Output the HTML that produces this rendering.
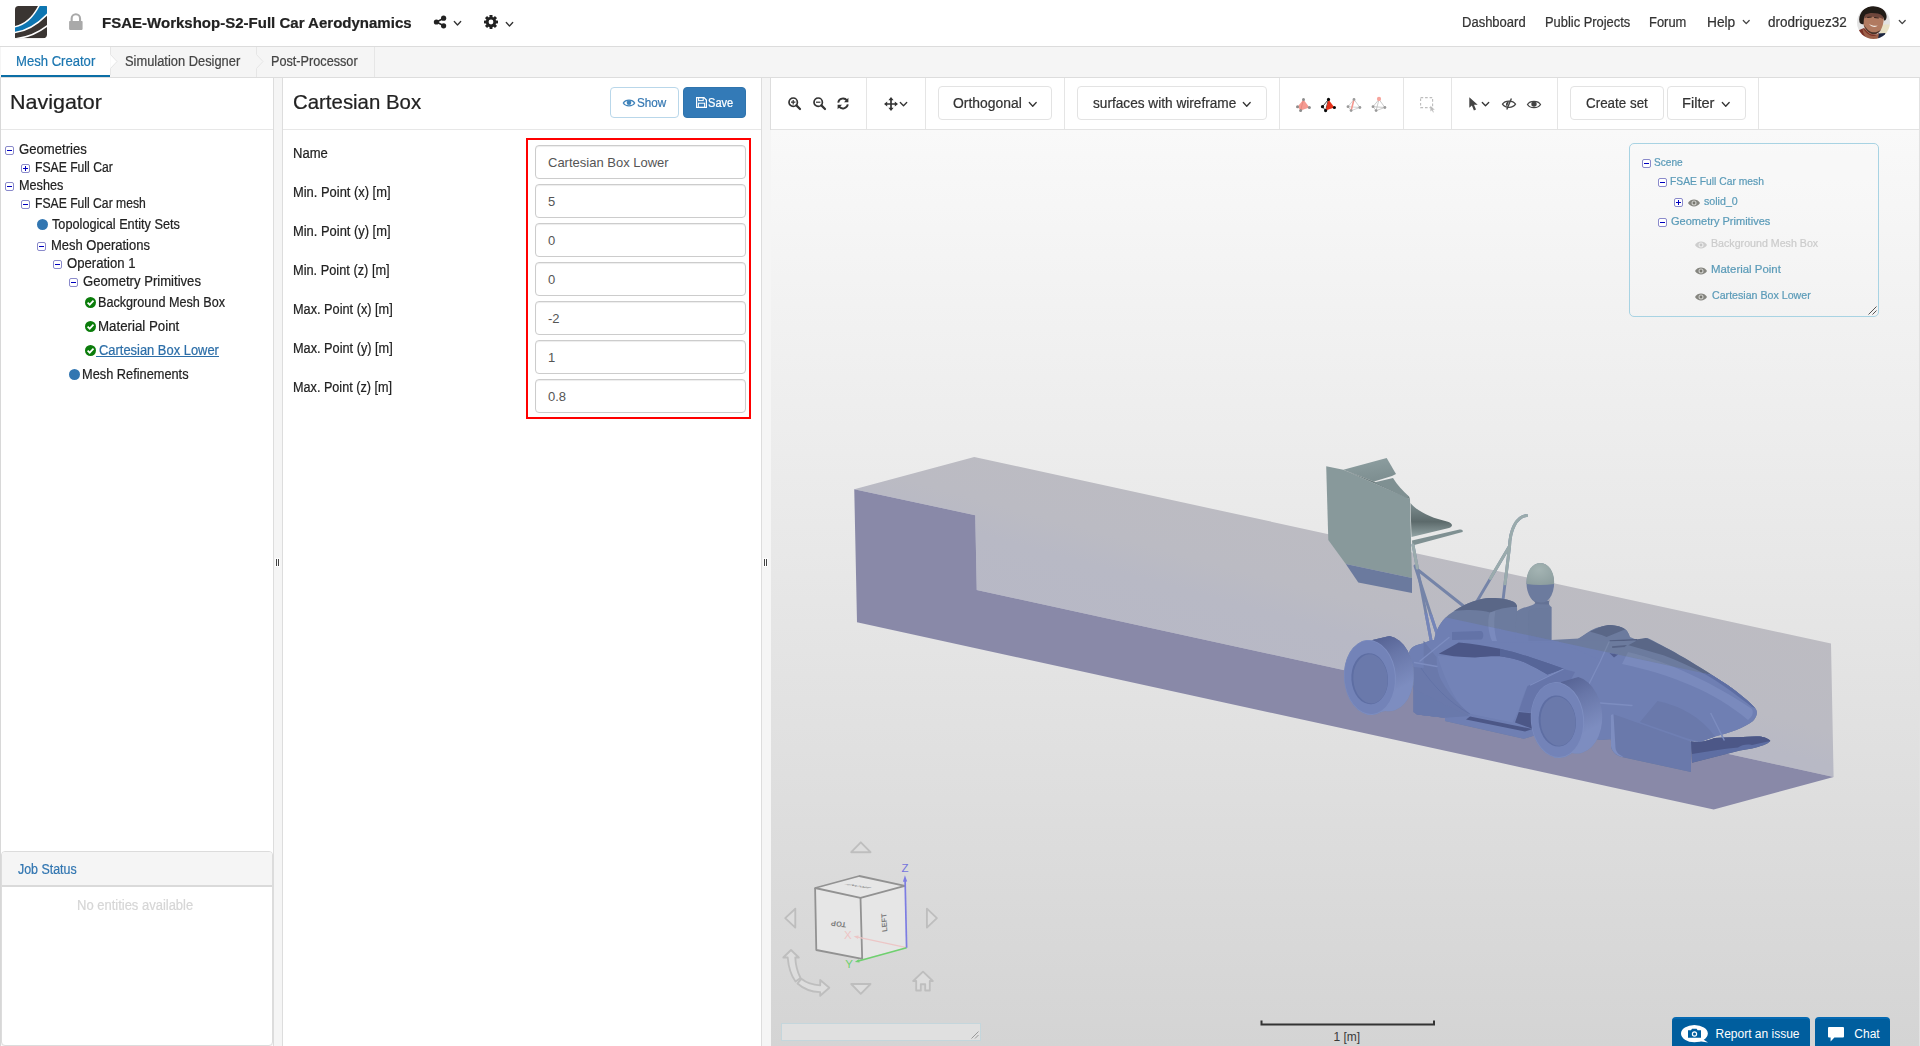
<!DOCTYPE html>
<html lang="en">
<head>
<meta charset="utf-8">
<title>FSAE-Workshop-S2-Full Car Aerodynamics</title>
<style>
*{box-sizing:border-box}
html,body{margin:0;padding:0}
body{width:1920px;height:1046px;overflow:hidden;background:#f5f5f5;font-family:"Liberation Sans",sans-serif;font-size:14px;color:#222;position:relative}
.abs{position:absolute}
.t{position:absolute;white-space:pre;line-height:1;transform-origin:0 0;display:block;-webkit-text-stroke:.22px currentColor}
svg{position:absolute;overflow:visible}
#hdr{position:absolute;left:0;top:0;width:1920px;height:47px;background:#fff;border-bottom:1px solid #dcdcdc}
#tabs{position:absolute;left:0;top:47px;width:1920px;height:31px;background:#f5f5f5;border-bottom:1px solid #dddddd}
#tab1{position:absolute;left:1px;top:0;width:109px;height:30px;background:#fff;border-bottom:2px solid #0b6ea6}
#nav{position:absolute;left:0;top:78px;width:274px;height:968px;background:#fff;border-left:1px solid #d8d8d8;border-right:1px solid #dddddd}
#form{position:absolute;left:282px;top:78px;width:480px;height:968px;background:#fff;border-left:1px solid #dddddd;border-right:1px solid #dddddd}
#view{position:absolute;left:770px;top:78px;width:1150px;height:968px;border-left:1px solid transparent;border-right:1px solid #e2e2e2;background-clip:padding-box;background-image:linear-gradient(to bottom,#f9f9f9 52px,#d4d4d4 968px)}
.phead{position:absolute;left:0;top:0;right:0;height:52px;border-bottom:1px solid #e7e7e7;background:#fff}
.btn{position:absolute;border-radius:4px;border:1px solid #e3e3e3;background:#fff}
.inp{position:absolute;left:252px;width:211px;height:34px;border:1px solid #ccc;border-radius:4px;background:#fff;box-shadow:inset 0 1px 1px rgba(0,0,0,.075);font-size:13px;color:#555;line-height:34px;padding-left:12px;white-space:pre}
.sep{position:absolute;top:0;width:1px;height:51px;background:#e5e5e5}
.xp{position:absolute;width:9px;height:9px;border:1px solid #8a8acb;border-radius:2px;background:#fff}
.xp:before{content:"";position:absolute;left:1px;top:3px;width:5px;height:1px;background:#0000c0}
.xp.plus:after{content:"";position:absolute;left:3px;top:1px;width:1px;height:5px;background:#0000c0}
.dot{position:absolute;width:11px;height:11px;border-radius:50%;background:#3276b1}
</style>
</head>
<body>
<!-- ===== top header ===== -->
<div id="hdr">
  <svg style="left:15px;top:5.8px" width="32" height="32.3" viewBox="0 0 32 32.3">
    <defs><clipPath id="lgc"><path d="M3.6,0 H30.6 Q32,0 32,1.4 V28.2 Q32,32.3 27.9,32.3 H0.8 Q0,32.3 0,31.5 V3.6 Q0,0 3.6,0 Z"/></clipPath></defs>
    <g clip-path="url(#lgc)">
      <rect width="32" height="32.3" fill="#3a3532"/>
      <path d="M0,20.7 C9,19 17.5,12.5 24,-0.5 L33,-0.5 L33,8.5 C22,18.8 11,25.2 0,26.6 Z" fill="#0d76b2"/>
      <path d="M-0.5,20.8 C9,19 17.5,12.5 24.1,-0.5" fill="none" stroke="#fff" stroke-width="1.5"/>
      <path d="M-0.5,26.65 C11,25.2 22,18.8 32.5,8.1" fill="none" stroke="#fff" stroke-width="1.5"/>
      <path d="M1,32.8 C12,31.6 23,27 32.5,19.7" fill="none" stroke="#fff" stroke-width="1.6"/>
    </g>
  </svg>
  <svg style="left:69px;top:12px" width="14" height="18" viewBox="69 12 14 18">
    <path d="M72.7,21.5 V18.5 A3.15,3.15 0 0 1 79,18.5 V21.5 H81.1 V18.5 A5.25,5.25 0 0 0 70.6,18.5 V21.5 Z" fill="#a9a9a9"/>
    <rect x="69.1" y="21" width="13.5" height="8.9" rx=".8" fill="#a9a9a9"/>
  </svg>
  <span class="t" style="left:101.53px;top:15.25px;font-size:15.5px;font-weight:700;color:#222;transform:scaleX(0.9689);">FSAE-Workshop-S2-Full Car Aerodynamics</span>
  <svg style="left:433px;top:15px" width="14" height="14" viewBox="0 0 14 14">
    <path d="M10.6,3.2 L3.6,7 L10.6,10.8" fill="none" stroke="#222" stroke-width="1.6"/>
    <circle cx="10.6" cy="3.2" r="2.6" fill="#222"/><circle cx="3.4" cy="7" r="2.6" fill="#222"/><circle cx="10.6" cy="10.8" r="2.6" fill="#222"/>
  </svg>
  <svg style="left:454px;top:21px" width="7" height="5" viewBox="0 0 7 5"><path d="M0.3,0.5 L3.5,4 L6.7,0.5" fill="none" stroke="#333" stroke-width="1.3" stroke-linecap="round" stroke-linejoin="round"/></svg>
  <svg style="left:484px;top:15px" width="14" height="14" viewBox="-7 -7 14 14">
    <g fill="#222">
      <circle r="5.2"/>
      <g id="gt"><rect x="-1.5" y="-7" width="3" height="3.2" rx=".4"/><rect x="-1.5" y="3.8" width="3" height="3.2" rx=".4"/></g>
      <use href="#gt" transform="rotate(45)"/><use href="#gt" transform="rotate(90)"/><use href="#gt" transform="rotate(135)"/>
    </g>
    <circle r="2.4" fill="#fff"/>
  </svg>
  <svg style="left:506px;top:22px" width="7" height="5" viewBox="0 0 7 5"><path d="M0.3,0.5 L3.5,4 L6.7,0.5" fill="none" stroke="#333" stroke-width="1.3" stroke-linecap="round" stroke-linejoin="round"/></svg>
  <span class="t" style="left:1461.57px;top:15.25px;font-size:14px;color:#333;transform:scaleX(0.9291);">Dashboard</span>
  <span class="t" style="left:1544.68px;top:15.25px;font-size:14px;color:#333;transform:scaleX(0.9209);">Public Projects</span>
  <span class="t" style="left:1649.08px;top:15.25px;font-size:14px;color:#333;transform:scaleX(0.9231);">Forum</span>
  <span class="t" style="left:1706.52px;top:15.25px;font-size:14px;color:#333;transform:scaleX(0.9815);">Help</span>
  <svg style="left:1743px;top:20px" width="6.5" height="4.6" viewBox="0 0 6.5 4.6"><path d="M0.3,0.5 L3.25,3.6 L6.2,0.5" fill="none" stroke="#444" stroke-width="1.3" stroke-linecap="round" stroke-linejoin="round"/></svg>
  <span class="t" style="left:1768.04px;top:15.25px;font-size:14px;color:#333;transform:scaleX(0.9625);">drodriguez32</span>
  <svg style="left:1857px;top:5.6px" width="33" height="33" viewBox="0 0 33 33">
    <defs><clipPath id="avc"><circle cx="16.5" cy="16.5" r="16.5"/></clipPath>
    <filter id="avb" x="-10%" y="-10%" width="120%" height="120%"><feGaussianBlur stdDeviation="0.55"/></filter></defs>
    <g clip-path="url(#avc)"><g filter="url(#avb)">
      <rect width="33" height="33" fill="#e3e3e3"/>
      <path d="M24,18.5 L34,18.5 L34,27 L23,28 Z" fill="#e9e2c6"/>
      <path d="M1,24.5 L7,22 L14,28 L21,28.5 L21.5,34 L-1,34 Z" fill="#7c3027"/>
      <path d="M21,27.5 L28.5,27 L26,34 L21,34 Z" fill="#1f2740"/>
      <path d="M6.5,23 C9,27 13,30 16,30 C19,30 21,28.5 22,27 L21,33 L12,34 C8,31 6,27 5.5,23.5 Z" fill="#9c6149"/>
      <path d="M5.5,12 C5,6 10,3 16,3.4 C22,3.8 27,6.5 26.8,12.5 C26.6,17 25.5,21 23.5,24.5 C21.5,27.5 18.5,29 15.5,28.6 C11.5,28 8.5,24.5 7,20.5 C6,17.5 5.6,14.5 5.5,12 Z" fill="#b17a60"/>
      <path d="M7,8 C12,5 22,5.5 26.5,9 L26,13 C21,10.5 12,10 7.5,12.5 Z" fill="#6f463a"/>
      <path d="M6.8,18.5 C8,23 11,27 15.5,28.2 C19,28.8 22,27 24,23.5 C22,25.5 19,26.6 16,26.3 C12,25.8 9,22.5 6.8,18.5 Z" fill="#4a332b"/>
      <path d="M2.5,16 C1,9 6,1.5 13,0.4 C21,-0.8 29,3 29.6,10 C29.8,13 28.5,15 27,14.5 C27,11 25,8.5 21,7.6 C16.5,6.6 11.5,6.6 8.4,8.6 C6.8,10.4 6.8,14 6.6,18 C4.6,18.6 3,17.6 2.5,16 Z" fill="#221a18"/>
      <path d="M12,17.8 C14.5,19.6 17.5,20.2 20.6,19.6 C19.6,21.6 14.5,21.8 12,17.8 Z" fill="#f1e9e2"/>
      <path d="M10.2,10.9 L14.6,10.4 L14.7,11.4 L10.3,11.9 Z M17.2,11 L21.8,11.6 L21.7,12.6 L17.1,12 Z" fill="#2f201b"/>
    </g></g>
  </svg>
  <svg style="left:1899px;top:20px" width="6.5" height="4.6" viewBox="0 0 6.5 4.6"><path d="M0.3,0.5 L3.25,3.6 L6.2,0.5" fill="none" stroke="#444" stroke-width="1.3" stroke-linecap="round" stroke-linejoin="round"/></svg>
</div>

<!-- ===== workflow tabs ===== -->
<div id="tabs">
  <div id="tab1"></div>
  <svg style="left:109px;top:0" width="10" height="30" viewBox="0 0 10 30">
    <path d="M1.5,0 V7.5 L8,14.5 L1.5,21.5 V28" fill="#fff" stroke="#e6e6e6" stroke-width="1"/>
    <rect x="0" y="0" width="1" height="28" fill="#fff"/>
  </svg>
  <svg style="left:255px;top:0" width="10" height="30" viewBox="0 0 10 30">
    <path d="M1.5,0 V7.5 L8,14.5 L1.5,21.5 V30" fill="#f5f5f5" stroke="#e6e6e6" stroke-width="1"/>
  </svg>
  <div class="abs" style="left:374px;top:0;width:1px;height:30px;background:#e6e6e6"></div>
  <span class="t" style="left:15.57px;top:7.25px;font-size:14px;color:#1b76b0;transform:scaleX(0.9345);">Mesh Creator</span>
  <span class="t" style="left:125.08px;top:7.25px;font-size:14px;color:#444;transform:scaleX(0.9194);">Simulation Designer</span>
  <span class="t" style="left:271.09px;top:7.25px;font-size:14px;color:#444;transform:scaleX(0.9053);">Post-Processor</span>
</div>

<!-- ===== navigator ===== -->
<div id="nav">
  <div class="phead"></div>
  <span class="t" style="left:8.95px;top:13.25px;font-size:21px;color:#222;transform:scaleX(1.0227);">Navigator</span>
  <i class="xp" style="left:4px;top:68px"></i><span class="t" style="left:17.81px;top:64.25px;font-size:14px;color:#222;transform:scaleX(0.9366);">Geometries</span>
  <i class="xp plus" style="left:20px;top:86px"></i><span class="t" style="left:34.13px;top:82.25px;font-size:14px;color:#222;transform:scaleX(0.8693);">FSAE Full Car</span>
  <i class="xp" style="left:4px;top:104px"></i><span class="t" style="left:18.10px;top:100.25px;font-size:14px;color:#222;transform:scaleX(0.9042);">Meshes</span>
  <i class="xp" style="left:20px;top:122px"></i><span class="t" style="left:34.13px;top:118.25px;font-size:14px;color:#222;transform:scaleX(0.8683);">FSAE Full Car mesh</span>
  <i class="dot" style="left:36px;top:141px"></i><span class="t" style="left:50.50px;top:139.25px;font-size:14px;color:#222;transform:scaleX(0.9079);">Topological Entity Sets</span>
  <i class="xp" style="left:36px;top:164px"></i><span class="t" style="left:50.07px;top:160.25px;font-size:14px;color:#222;transform:scaleX(0.9276);">Mesh Operations</span>
  <i class="xp" style="left:52px;top:182px"></i><span class="t" style="left:66.06px;top:178.25px;font-size:14px;color:#222;transform:scaleX(0.9375);">Operation 1</span>
  <i class="xp" style="left:68px;top:200px"></i><span class="t" style="left:82.06px;top:196.25px;font-size:14px;color:#222;transform:scaleX(0.9360);">Geometry Primitives</span>
  <svg style="left:84px;top:219px" width="11" height="11" viewBox="0 0 11 11"><circle cx="5.5" cy="5.5" r="5.5" fill="#0b7c0b"/><path d="M2.6,5.6 L4.7,7.7 L8.5,3.7" fill="none" stroke="#fff" stroke-width="1.7"/></svg>
  <span class="t" style="left:97.35px;top:217.25px;font-size:14px;color:#222;transform:scaleX(0.9025);">Background Mesh Box</span>
  <svg style="left:84px;top:243px" width="11" height="11" viewBox="0 0 11 11"><circle cx="5.5" cy="5.5" r="5.5" fill="#0b7c0b"/><path d="M2.6,5.6 L4.7,7.7 L8.5,3.7" fill="none" stroke="#fff" stroke-width="1.7"/></svg>
  <span class="t" style="left:97.30px;top:241.25px;font-size:14px;color:#222;transform:scaleX(0.9500);">Material Point</span>
  <svg style="left:84px;top:267px" width="11" height="11" viewBox="0 0 11 11"><circle cx="5.5" cy="5.5" r="5.5" fill="#0b7c0b"/><path d="M2.6,5.6 L4.7,7.7 L8.5,3.7" fill="none" stroke="#fff" stroke-width="1.7"/></svg>
  <span class="t" style="left:97.58px;top:265.25px;font-size:14px;color:#2c6ea8;transform:scaleX(0.9225);">Cartesian Box Lower</span>
  <div class="abs" style="left:95px;top:278px;width:123px;height:1px;background:#2c6ea8"></div>
  <i class="dot" style="left:68px;top:291px"></i><span class="t" style="left:81.09px;top:289.25px;font-size:14px;color:#222;transform:scaleX(0.9130);">Mesh Refinements</span>

  <div class="abs" style="left:0;top:773px;width:272px;height:195px;border:1px solid #dcdcdc;border-radius:4px;background:#fff;box-shadow:0 1px 1px rgba(0,0,0,.05)">
    <div class="abs" style="left:0;top:0;width:270px;height:35px;background:#f5f5f5;border-bottom:2px solid #dadada;border-radius:3px 3px 0 0"></div>
  </div>
  <span class="t" style="left:16.50px;top:784.25px;font-size:14px;color:#3276b1;transform:scaleX(0.8864);">Job Status</span>
  <span class="t" style="left:76.07px;top:820.25px;font-size:14px;color:#d6d6d6;transform:scaleX(0.9274);">No entities available</span>
</div>

<!-- splitter handles -->
<div class="abs" style="left:275px;top:558px;width:5px;height:9px;background:#fdfdfd"></div><div class="abs" style="left:276px;top:559px;width:1px;height:7px;background:#444"></div><div class="abs" style="left:278px;top:559px;width:1px;height:7px;background:#444"></div>
<div class="abs" style="left:763px;top:558px;width:5px;height:9px;background:#fdfdfd"></div><div class="abs" style="left:764px;top:559px;width:1px;height:7px;background:#444"></div><div class="abs" style="left:766px;top:559px;width:1px;height:7px;background:#444"></div>

<!-- ===== properties form ===== -->
<div id="form">
  <div class="phead"></div>
  <span class="t" style="left:9.78px;top:13.25px;font-size:21px;color:#222;transform:scaleX(0.9714);">Cartesian Box</span>
  <div class="btn" style="left:327px;top:9px;width:69px;height:31px;border-color:#b9d7ea"></div>
  <svg style="left:340px;top:21px" width="12" height="8" viewBox="0 0 12 8"><path d="M0.3,4 C2.5,0.2 9.5,0.2 11.7,4 C9.5,7.8 2.5,7.8 0.3,4 Z" fill="none" stroke="#3f83ba" stroke-width="1.2"/><circle cx="6" cy="3.8" r="2.3" fill="#3f83ba"/></svg>
  <span class="t" style="left:353.78px;top:19.25px;font-size:12px;color:#3678b2;transform:scaleX(0.9741);">Show</span>
  <div class="btn" style="left:400px;top:9px;width:63px;height:31px;background:#337ab7;border-color:#2f74ad"></div>
  <svg style="left:413px;top:19px" width="11" height="11" viewBox="0 0 11 11"><path d="M0.6,0.6 H8 L10.4,3 V10.4 H0.6 Z" fill="none" stroke="#fff" stroke-width="1.2"/><rect x="2.6" y="0.6" width="4.6" height="3" fill="none" stroke="#fff" stroke-width="1"/><rect x="2.4" y="6.2" width="6.2" height="4.2" fill="none" stroke="#fff" stroke-width="1"/></svg>
  <span class="t" style="left:425.08px;top:19.25px;font-size:12px;color:#fff;transform:scaleX(0.9231);">Save</span>

  <span class="t" style="left:9.57px;top:68.25px;font-size:14px;color:#222;transform:scaleX(0.9306);">Name</span>
  <span class="t" style="left:9.58px;top:107.25px;font-size:14px;color:#222;transform:scaleX(0.9221);">Min. Point (x) [m]</span>
  <span class="t" style="left:9.58px;top:146.25px;font-size:14px;color:#222;transform:scaleX(0.9221);">Min. Point (y) [m]</span>
  <span class="t" style="left:9.59px;top:185.25px;font-size:14px;color:#222;transform:scaleX(0.9135);">Min. Point (z) [m]</span>
  <span class="t" style="left:9.59px;top:224.25px;font-size:14px;color:#222;transform:scaleX(0.9093);">Max. Point (x) [m]</span>
  <span class="t" style="left:9.59px;top:263.25px;font-size:14px;color:#222;transform:scaleX(0.9093);">Max. Point (y) [m]</span>
  <span class="t" style="left:9.60px;top:302.25px;font-size:14px;color:#222;transform:scaleX(0.9028);">Max. Point (z) [m]</span>
  <div class="abs" style="left:243px;top:60px;width:225px;height:281px;border:2px solid #f00"></div>
  <div class="inp" style="top:67px">Cartesian Box Lower</div>
  <div class="inp" style="top:106px">5</div>
  <div class="inp" style="top:145px">0</div>
  <div class="inp" style="top:184px">0</div>
  <div class="inp" style="top:223px">-2</div>
  <div class="inp" style="top:262px">1</div>
  <div class="inp" style="top:301px">0.8</div>
</div>
<!-- ===== 3D viewer ===== -->
<div id="view">
  <div class="phead" style="height:52px;border-bottom:1px solid #e3e3e3"></div>
  <div class="abs" style="left:-1px;top:0;width:1px;height:52px;background:#dddddd"></div>
  <i class="sep" style="left:95px"></i><i class="sep" style="left:154px"></i><i class="sep" style="left:293px"></i><i class="sep" style="left:508px"></i>
  <i class="sep" style="left:632px"></i><i class="sep" style="left:680px"></i><i class="sep" style="left:786px"></i><i class="sep" style="left:987px"></i>

  <!-- zoom in / zoom out / refresh -->
  <svg style="left:17px;top:19px" width="13" height="13" viewBox="0 0 13 13"><circle cx="5.2" cy="5.2" r="4.2" fill="none" stroke="#333" stroke-width="1.7"/><path d="M8.4,8.4 L12,12" stroke="#333" stroke-width="2.2" stroke-linecap="round"/><path d="M3,5.2 H7.4 M5.2,3 V7.4" stroke="#333" stroke-width="1.2"/></svg>
  <svg style="left:41.5px;top:19px" width="13" height="13" viewBox="0 0 13 13"><circle cx="5.2" cy="5.2" r="4.2" fill="none" stroke="#333" stroke-width="1.7"/><path d="M8.4,8.4 L12,12" stroke="#333" stroke-width="2.2" stroke-linecap="round"/><path d="M3,5.2 H7.4" stroke="#333" stroke-width="1.2"/></svg>
  <svg style="left:66px;top:19px" width="12" height="13" viewBox="0 0 12 13"><path d="M1.2,5.6 A4.9,4.9 0 0 1 10,3.6" fill="none" stroke="#333" stroke-width="1.9"/><path d="M11.4,0.8 V5.2 H7 Z" fill="#333"/><path d="M10.8,7.4 A4.9,4.9 0 0 1 2,9.4" fill="none" stroke="#333" stroke-width="1.9"/><path d="M0.6,12.2 V7.8 H5 Z" fill="#333"/></svg>
  <!-- pan -->
  <svg style="left:112.5px;top:19px" width="14" height="14" viewBox="0 0 14 14"><path d="M7,1.5 V12.5 M1.5,7 H12.5" stroke="#333" stroke-width="1.7"/><path d="M7,0 L9.6,3.2 H4.4 Z M7,14 L9.6,10.8 H4.4 Z M0,7 L3.2,4.4 V9.6 Z M14,7 L10.8,4.4 V9.6 Z" fill="#333"/></svg>
  <svg style="left:129px;top:23.599999999999994px" width="7" height="4.8" viewBox="0 0 7 4.8"><path d="M0.3,0.5 L3.5,3.8 L6.7,0.5" fill="none" stroke="#333" stroke-width="1.3" stroke-linecap="round" stroke-linejoin="round"/></svg>
  <!-- projection -->
  <div class="btn" style="left:167px;top:8px;width:114px;height:34px"></div>
  <span class="t" style="left:181.76px;top:18.25px;font-size:14px;color:#333;transform:scaleX(0.9926);">Orthogonal</span>
  <svg style="left:257.5px;top:23.599999999999994px" width="7.5" height="5.2" viewBox="0 0 7.5 5.2"><path d="M0.3,0.5 L3.75,4.2 L7.2,0.5" fill="none" stroke="#333" stroke-width="1.3" stroke-linecap="round" stroke-linejoin="round"/></svg>
  <!-- render mode -->
  <div class="btn" style="left:306px;top:8px;width:190px;height:34px"></div>
  <span class="t" style="left:321.78px;top:18.25px;font-size:14px;color:#333;transform:scaleX(0.9743);">surfaces with wireframe</span>
  <svg style="left:471.5px;top:23.599999999999994px" width="7.5" height="5.2" viewBox="0 0 7.5 5.2"><path d="M0.3,0.5 L3.75,4.2 L7.2,0.5" fill="none" stroke="#333" stroke-width="1.3" stroke-linecap="round" stroke-linejoin="round"/></svg>

  <!-- pick-mode tetrahedra -->
  <svg style="left:524px;top:19px" width="92" height="17" viewBox="1295 97 92 17">
    <g id="tet1">
      <path d="M1303.5,99.4 L1297.5,106.7 L1300.6,110.6 L1309.4,107.5 Z" fill="#f59b92"/>
      <path d="M1303.5,99.4 L1300.6,110.6" stroke="#e07f77" stroke-width=".7"/>
      <g fill="#8c8c8c"><circle cx="1303.5" cy="99.4" r="1.5"/><circle cx="1297.5" cy="106.7" r="1.5"/><circle cx="1300.6" cy="110.6" r="1.5"/><circle cx="1309.4" cy="107.5" r="1.5"/></g>
    </g>
    <g transform="translate(25,0)">
      <path d="M1303.5,99.4 L1297.5,106.7 L1300.6,110.6 Z" fill="#fff" stroke="#111" stroke-width=".8"/>
      <path d="M1303.5,99.4 L1300.6,110.6 L1309.4,107.5 Z" fill="#e8331c"/>
      <g fill="#0a0a0a"><circle cx="1303.5" cy="99.4" r="1.6"/><circle cx="1297.5" cy="106.7" r="1.6"/><circle cx="1300.6" cy="110.6" r="1.6"/><circle cx="1309.4" cy="107.5" r="1.6"/></g>
    </g>
    <g transform="translate(50.5,0)">
      <path d="M1303.5,99.4 L1297.5,106.7 L1300.6,110.6 L1309.4,107.5 Z M1297.5,106.7 L1309.4,107.5" fill="none" stroke="#bdbdbd" stroke-width=".7"/>
      <path d="M1303.5,99.4 L1300.6,110.6" stroke="#f4968d" stroke-width="1.6"/>
      <g fill="#9a9a9a"><circle cx="1303.5" cy="99.4" r="1.4"/><circle cx="1297.5" cy="106.7" r="1.4"/><circle cx="1300.6" cy="110.6" r="1.4"/><circle cx="1309.4" cy="107.5" r="1.4"/></g>
    </g>
    <g transform="translate(75.5,0)">
      <path d="M1303.5,99.4 L1297.5,106.7 L1300.6,110.6 L1309.4,107.5 Z M1297.5,106.7 L1309.4,107.5 M1303.5,99.4 L1300.6,110.6" fill="none" stroke="#b5b5b5" stroke-width=".7"/>
      <g fill="#9a9a9a"><circle cx="1297.5" cy="106.7" r="1.4"/><circle cx="1300.6" cy="110.6" r="1.4"/><circle cx="1309.4" cy="107.5" r="1.4"/></g>
      <circle cx="1303.5" cy="98.9" r="2.1" fill="#f7a49c"/>
    </g>
  </svg>
  <!-- box select (disabled) -->
  <svg style="left:649px;top:19px" width="16" height="16" viewBox="0 0 16 16"><rect x=".6" y=".6" width="12" height="10" fill="none" stroke="#bdbdbd" stroke-width="1.1" stroke-dasharray="2.6 1.9"/><path d="M10.4,8.8 L10.4,14.6 L11.9,13.2 L13,15.6 L13.9,15.2 L12.8,12.8 L14.8,12.8 Z" fill="#bdbdbd"/></svg>
  <!-- pointer -->
  <svg style="left:697.5px;top:19px" width="10" height="14" viewBox="0 0 10 14"><path d="M0.3,0.2 L0.3,10.8 L2.9,8.5 L4.9,13.4 L7,12.5 L5,7.8 L8.7,7.8 Z" fill="#444"/></svg>
  <svg style="left:711px;top:23.599999999999994px" width="7" height="4.8" viewBox="0 0 7 4.8"><path d="M0.3,0.5 L3.5,3.8 L6.7,0.5" fill="none" stroke="#333" stroke-width="1.3" stroke-linecap="round" stroke-linejoin="round"/></svg>
  <!-- hide / show -->
  <svg style="left:731px;top:20px" width="14" height="12" viewBox="0 0 14 12"><path d="M0.5,6.2 C3,2 11,2 13.5,6.2 C11,10.4 3,10.4 0.5,6.2 Z" fill="none" stroke="#444" stroke-width="1.3"/><path d="M7,3.4 A2.8,2.8 0 0 0 5,8.4 Z" fill="#444"/><path d="M9.4,0.6 L4.8,11.4" stroke="#444" stroke-width="1.4"/></svg>
  <svg style="left:756px;top:22px" width="14" height="9" viewBox="0 0 14 9"><path d="M0.5,4.5 C3,0.3 11,0.3 13.5,4.5 C11,8.7 3,8.7 0.5,4.5 Z" fill="none" stroke="#444" stroke-width="1.3"/><circle cx="7" cy="4.1" r="2.7" fill="#444"/></svg>
  <!-- sets -->
  <div class="btn" style="left:799px;top:8px;width:94px;height:34px"></div>
  <span class="t" style="left:814.54px;top:18.25px;font-size:14px;color:#333;transform:scaleX(0.9570);">Create set</span>
  <div class="btn" style="left:896px;top:8px;width:79px;height:34px"></div>
  <span class="t" style="left:911.46px;top:18.25px;font-size:14px;color:#333;transform:scaleX(1.0417);">Filter</span>
  <svg style="left:951px;top:23.599999999999994px" width="7.5" height="5.2" viewBox="0 0 7.5 5.2"><path d="M0.3,0.5 L3.75,4.2 L7.2,0.5" fill="none" stroke="#333" stroke-width="1.3" stroke-linecap="round" stroke-linejoin="round"/></svg>
  <!-- 3D scene (drawn in page coordinates) -->
  <svg id="scene" style="left:0;top:52px" width="1148" height="916" viewBox="771 130 1148 916">
    <defs>
      <linearGradient id="gLight" gradientUnits="userSpaceOnUse" x1="1300" y1="480" x2="1240" y2="700"><stop offset="0" stop-color="#bdbcc2"/><stop offset=".45" stop-color="#bbbbc3"/><stop offset=".6" stop-color="#b8b9c5"/><stop offset="1" stop-color="#b7b8c6"/></linearGradient>
      <linearGradient id="gShade" x1="0.2" y1="0" x2="0.5" y2="1"><stop offset="0" stop-color="#1c2452" stop-opacity=".42"/><stop offset=".3" stop-color="#1c2452" stop-opacity=".22"/><stop offset=".75" stop-color="#1c2452" stop-opacity="0"/></linearGradient>
      <linearGradient id="gWing" x1="0" y1="0" x2="0" y2="1"><stop offset="0" stop-color="#7d8e90"/><stop offset=".55" stop-color="#5c6a6b"/><stop offset="1" stop-color="#93a4a5"/></linearGradient>
      <linearGradient id="gFlap" x1="0" y1="0" x2=".3" y2="1"><stop offset="0" stop-color="#8fa0a2"/><stop offset="1" stop-color="#7e8f91"/></linearGradient>
      <radialGradient id="gHelm" cx=".45" cy=".3" r=".8"><stop offset="0" stop-color="#a4b4b3"/><stop offset="1" stop-color="#8c9d9e"/></radialGradient>
      <clipPath id="nearC"><path d="M771,471 L1919,720 L1919,1046 L771,1046 Z"/></clipPath>
      <clipPath id="topC"><path d="M771,130 L771,412.9 L1919,662 L1919,130 Z"/></clipPath>

      <!-- car geometry; colours come from CSS variables so it can be re-tinted per zone -->
      <g id="car">
        <!-- rear wing supports & bracing (below wing) -->
        <g fill="none" stroke="var(--t)" stroke-width="2.9" stroke-linecap="round">
          <path d="M1413,545 L1431,640"/><path d="M1415,566 L1439,640"/><path d="M1418,570 L1466,608"/>
          <path d="M1509,547 L1473,608"/><path d="M1526.5,515.5 C1516,517 1510,530 1509.5,547 L1498,641"/>
        </g>
        <!-- rear bodywork block + floor -->
        <path d="M1409,653 C1410,647 1416,645 1423,643.5 L1431,640 L1560,640 L1560,735 L1532,731 L1500,727 L1468,720.5 L1417,714.5 L1413.6,712 L1413.6,668 Z" fill="var(--m)"/>
        <path d="M1423.7,641 L1423.7,668 L1413.6,667 L1413.6,712 L1417,714.5 L1468,720.5 L1470,690 L1445,668 Z" fill="var(--w)"/>
        <!-- engine cover / headrest -->
        <path d="M1434,641 C1436,628 1443,618 1452,612.5 C1462,605.5 1474,600 1486,598.3 C1496,597.5 1508,599 1513.5,601.8 C1517,604 1517.5,608 1517,612 L1517,641 Z" fill="var(--m)"/>
        <path d="M1454,611 C1462,605.5 1474,600 1486,598.3 C1496,597.5 1508,599 1513.5,601.8 C1516.5,603.5 1517.3,605.5 1517,607 C1508,606.5 1498,609 1490,612.5 C1483,610 1470,609 1454,611 Z" fill="var(--d)"/>
        <path d="M1490,612.5 C1487,620 1488,632 1492,641 L1497,641 C1494,632 1493.5,620 1495.5,611 Z" fill="var(--l)" opacity=".8"/>
        <path d="M1452,632 L1481,631 C1484,631.5 1484,639 1481,639.5 L1452,640 Z" fill="var(--d)" opacity=".7"/>
        <!-- driver -->
        <path d="M1515,641 L1516.5,611.5 C1521,608 1527,607 1532.5,605 C1535,604 1535.6,602.5 1535.4,600.5 L1549,601 C1548.6,603.5 1549,605.5 1551.5,607 L1551.5,641 Z" fill="var(--m)"/>
        <ellipse cx="1540.3" cy="583.3" rx="13.8" ry="20.4" fill="var(--m)"/>
        <path d="M1528,611.5 C1533,607.5 1540,607.5 1546,608.5 L1551.5,607 L1551.5,641 L1528.5,641 Z" fill="var(--w)" opacity=".5"/>
        <path d="M1531,598 C1534,603.5 1547,604 1550.5,598.5 C1549.5,601 1549,603 1549,604.5 L1535.5,604 C1535.5,602 1533.5,600 1531,598 Z" fill="var(--d)" opacity=".4"/>
        <!-- monocoque, nose -->
        <path d="M1551,640 L1579,638.5 C1584,635 1589,630.5 1596,628 C1603,625.5 1612,625 1619,626.5 C1626,628.5 1629,633 1630,637 L1637,640 L1647.5,638 C1664,646 1690,660 1727.5,685 C1740,694 1750,702 1755,708 C1758,711.5 1757.5,716 1753,721 C1744,728 1730,732.5 1715,736.5 L1700,742 L1640,737 L1600,740 L1560,730 Z" fill="var(--m)"/>
        <!-- nose top (shadowed) band -->
        <path d="M1646,638 C1664,646 1690,660 1727.5,685 C1740,694 1750,702 1755,708 L1752,707 C1738,696 1722,684 1706.5,675 C1692,667 1678,660.5 1663.4,655.2 L1627,644.8 L1637.5,639.2 Z" fill="var(--d)"/>
        <path d="M1628,652 C1670,662 1715,684 1752,709 C1754,713 1752,717 1748,720 C1715,692 1670,674 1622,664 Z" fill="var(--l)" opacity=".75"/>
        <!-- dash hoop hump -->
        <path d="M1578,638.7 C1584,635.5 1587,633.5 1590,631.8 C1594,629.5 1597.5,628 1601.3,626.7 C1604.5,625.6 1607.5,625 1610.8,625 C1616,625.2 1621,626.8 1625.4,629.2 C1627.5,630.8 1628.4,633 1628.8,635.3 L1630,638.3 L1609,640.5 L1578,640.5 Z" fill="var(--m)"/>
        <path d="M1590,631.8 C1594,629.5 1597.5,628 1601.3,626.7 C1604.5,625.6 1607.5,625 1610.8,625 C1616,625.2 1621,626.8 1625.4,629.2 L1606.5,637 C1601,634.6 1595.5,633 1590,631.8 Z" fill="var(--d)"/>
        <path d="M1609.5,640.2 L1637.5,639 L1636.8,640.6 L1610,641.6 Z" fill="var(--dd)"/>
        <path d="M1610,641.6 L1636.8,640.6 L1627,646 L1613,657 L1608.5,653 Z" fill="var(--m)"/>
        <path d="M1612,646.3 L1627,645 L1624.5,647 L1612.3,648 Z M1609.5,653 L1618,654.5 L1614,657.5 Z" fill="var(--dd)" opacity=".85"/>
        <!-- side pod -->
        <path d="M1437,655 L1459,642.5 L1560,642 L1600,660 L1590,690 L1562,672 L1541,683 L1533,705 L1533,731 L1490,727 C1470,716 1452,700 1441,680 C1437,672 1436,662 1437,655 Z" fill="var(--m)"/>
        <path d="M1527.5,686 L1563.5,669 L1575,672 L1560,700 L1533,713 L1518.8,711 Z" fill="var(--d)" opacity=".55"/>
        <path d="M1437.5,656 C1440,664 1446,682 1453.8,695 C1458,703 1464,709 1470,713.8 L1512.5,722.5 L1518.8,710 C1521,702 1524,693 1527.5,686.3 C1536,681 1550,675 1563.5,669 L1547.5,674.4 C1540,670 1532,666 1525,662.5 C1517,659.5 1508,657.3 1500,656.3 C1492,656 1483,656.8 1475,657.5 C1468,657.3 1461,657 1453.8,656.3 Z" fill="var(--l)" opacity=".32"/>
        <path d="M1438.8,653.8 L1458.8,642.5 C1472,643.5 1486,645.8 1500,648.8 C1511,651.3 1521,654.3 1531,657.5 C1542,661 1553,665 1563.8,668.8 L1547.5,674.4 C1540,670 1532,666 1525,662.5 C1517,659.5 1508,657.3 1500,656.3 C1492,656 1483,656.8 1475,657.5 C1468,657.3 1461,657 1453.8,656.3 Z" fill="var(--dd)"/>
        <path d="M1500,648.8 C1511,651.3 1521,654.3 1531,657.5 C1542,661 1553,665 1563.8,668.8 L1547.5,674.4 C1540,670 1532,666 1525,662.5 C1517,659.5 1508,657.3 1500,656.3 Z" fill="var(--d)" opacity=".6"/>
        <path d="M1415,690 C1425,694 1445,706 1470,716 L1470,720.5 L1418,714.5 L1415,712 Z" fill="var(--w)" opacity=".7"/>
        <path d="M1421,668 C1432,684 1448,702 1470,714" fill="none" stroke="var(--d)" stroke-width="1" opacity=".6"/>
        <path d="M1470,716 L1525,730.5 L1536,730.5 L1536,735 L1523.8,738.8 L1445,721 L1445,717.8 Z" fill="var(--m)"/>
        <path d="M1470,716.5 L1532.5,729 L1525,731.5 L1466,719.5 Z" fill="var(--dd)"/>
        <path d="M1518.8,712 L1533,713.5 L1533,729 L1515,722.5 Z" fill="var(--dd)"/>
        <path d="M1563.5,669 L1530,685.3" stroke="var(--l)" stroke-width="1.1" fill="none"/>
        <!-- rear wheel -->
        <g>
          <path d="M1372.6,640.1 L1389.6,636.1 A26,37.5 -4 0 1 1385.4,710.9 L1367.4,714.9 Z" fill="var(--l)"/>
          <path d="M1372.6,640.1 L1389.6,636.1 A26,37.5 -4 0 1 1385.4,710.9 L1367.4,714.9 Z" fill="url(#gShade)"/>
          <ellipse cx="1370" cy="677.5" rx="26" ry="37.5" transform="rotate(-4 1370 677.5)" fill="var(--l)"/>
          <ellipse cx="1369.7" cy="677.3" rx="25.2" ry="36.7" transform="rotate(-4 1369.7 677.3)" fill="var(--r)"/>
          <ellipse cx="1369.7" cy="678.7" rx="18.3" ry="25.6" transform="rotate(-4 1369.7 678.7)" fill="var(--d)"/>
          <ellipse cx="1370.5" cy="678.9" rx="17.2" ry="24.6" transform="rotate(-4 1370.5 678.9)" fill="var(--w)"/>
        </g>
        <!-- suspension links -->
        <g fill="none" stroke="var(--l)" stroke-width="1.3" stroke-linecap="round">
          <path d="M1420,661 L1449,637.5"/><path d="M1414.5,662.5 L1437,666.5"/>
          <path d="M1609,642 L1600,662 L1588,686"/><path d="M1600,703 L1632,705.5"/>
        </g>
        <!-- front wheel -->
        <g>
          <path d="M1560.8,682.1 L1578.3,677.1 A26.7,38 -5 0 1 1571.7,752.9 L1554.2,757.9 Z" fill="var(--l)"/>
          <path d="M1560.8,682.1 L1578.3,677.1 A26.7,38 -5 0 1 1571.7,752.9 L1554.2,757.9 Z" fill="url(#gShade)"/>
          <ellipse cx="1557.5" cy="720" rx="26.7" ry="38" transform="rotate(-5 1557.5 720)" fill="var(--l)"/>
          <ellipse cx="1557.2" cy="719.8" rx="25.9" ry="37.2" transform="rotate(-5 1557.2 719.8)" fill="var(--r)"/>
          <ellipse cx="1557.3" cy="721" rx="18.6" ry="25.6" transform="rotate(-5 1557.3 721)" fill="var(--d)"/>
          <ellipse cx="1558.1" cy="721.2" rx="17.5" ry="24.6" transform="rotate(-5 1558.1 721.2)" fill="var(--w)"/>
        </g>
        <!-- front wing -->
        <path d="M1691,741.5 C1700,743 1708,741 1715,738 L1757,736.6 C1763,736.6 1768.5,738.5 1770.3,741 C1768,744 1760,746.5 1752,748.5 L1740,750.5 L1692,762.8 Z" fill="var(--d)"/>
        <path d="M1691,741.5 C1700,743 1708,741 1715,738 L1757,736.6 C1763,736.6 1768.5,738.5 1770.3,741 L1752,745 C1746,744 1742,745 1738,747.5 C1722,749 1706,751.5 1692,754 Z" fill="var(--dd)"/>
        <path d="M1657.5,701 C1680,706 1700,716 1715,736.5 L1700,741.5 C1690,740 1675,734 1660,729 L1640,722 Z" fill="var(--w)"/>
        <path d="M1610.8,716 C1610.8,714.5 1612,713.8 1613.5,714.3 L1691,741.8 L1691,772 L1622,757 C1616,755.5 1611.5,751 1611,746 Z" fill="var(--w)"/>
        <path d="M1610.8,716 C1610.8,714.5 1612,713.8 1613.5,714.3 L1615.5,748 C1616,752 1619,755 1623,756.5 L1622,757 C1616,755.5 1611.5,751 1611,746 Z" fill="var(--l)"/>
        <path d="M1710.6,713 L1724.4,740.5" stroke="var(--l)" stroke-width="1.4" fill="none"/>
      </g>
    </defs>

    <!-- refinement box -->
    <path d="M854.25,489.25 L974.25,457 L1831,643.6 L1833.6,776.9 L976.75,590 L975.25,515.2 Z" fill="url(#gLight)"/>
    <path d="M854.25,489.25 L975.25,515.2 L976.75,590 L1833.6,776.9 L1713.7,809.4 L857,622.2 Z" fill="#8989a8"/>

    <!-- car: parts seen through the box top (grey-blue) -->
    <use href="#car" style="--m:#6c7b9e;--l:#7887a9;--d:#5a6787;--dd:#525e80;--w:#6a799c;--t:#7584a8;--r:#7483a6"/>
    <!-- car: parts seen through the near side of the box (brighter blue) -->
    <use href="#car" clip-path="url(#nearC)" style="--m:#6f7fb3;--l:#7d8dc0;--d:#5e6ea3;--dd:#4c5787;--w:#6a79ab;--t:#7585b9;--r:#7383b8"/>

    <!-- parts sticking out above the box (untinted, grey-green) -->
    <g>
      <!-- rear wing end plate -->
      <path d="M1326.2,466.2 L1343.3,469.7 L1410,499 L1412,578 L1345.8,564 L1328.3,540 Z" fill="#88999b"/>
      <path d="M1345.8,564 L1412,578 L1412,593 L1358.3,582.5 Z" fill="#6b7a9e"/>
      <!-- flaps -->
      <path d="M1343.3,469.7 L1386.7,458 L1396,474 L1392,476 L1374,481.5 Z" fill="url(#gFlap)"/><path d="M1343.3,469.7 L1410,499 L1409,496.5 L1374,481.5 Z" fill="#6f7f81"/>
      <path d="M1374,482.5 L1393,478 C1397,485 1403,491 1409,496.5 L1406.5,498 Z" fill="#7f9092"/>
      <path d="M1410.5,503 C1418,512 1432,518 1447,521.5 C1453,523 1453.5,526.5 1449,528 L1411.5,537 Z" fill="url(#gWing)"/>
      <path d="M1412,540.5 L1459.5,529.5 C1462,529 1463.5,530.5 1462.5,532 L1412.5,545.5 Z" fill="#7f9092"/>
      <!-- tubes above the box -->
      <g fill="none" stroke="#9aabac" stroke-width="3" stroke-linecap="round">
        <path d="M1413,545 L1417.3,568"/>
        <path d="M1509,547 L1490.3,578.5"/>
        <path d="M1526.5,515.5 C1516,517 1510,530 1509.5,547 L1505,583.8"/>
      </g>
      <!-- helmet top -->
      <path d="M1526.6,584 C1526.5,583 1526.5,582.3 1526.5,581.5 C1526.5,571 1532.5,562.9 1540.3,562.9 C1548,562.9 1554.1,571 1554.1,581.5 C1554.1,582.3 1554.1,583 1554,584 C1545,585.4 1535,585.4 1526.6,584 Z" fill="url(#gHelm)"/>
    </g>

    <!-- orientation cube -->
    <g id="cube">
      <g fill="#dddddd" stroke="#bebebe" stroke-width="1.85" stroke-linejoin="round">
        <path d="M851.2,852.2 L870.5,852.2 L860.8,842.3 Z"/>
        <path d="M851.2,984 L870.5,984 L860.8,993.8 Z"/>
        <path d="M795.3,908.7 L795.3,927.6 L785.2,918.1 Z"/>
        <path d="M926.9,908.7 L926.9,927.6 L936.9,918.1 Z"/>
        <path d="M923,971.7 L932.8,981 L929.8,981 L929.8,990.5 L925.2,990.5 L925.2,984.2 L920.8,984.2 L920.8,990.5 L916.2,990.5 L916.2,981 L913.2,981 Z"/>
        <path d="M791,950 L798.8,957.5 L795.3,957.5 C795.6,966 798,973 800.5,978 L795.5,981.5 C791.5,976 788.6,968 787.7,957.5 L783.3,957.5 Z"/>
        <path d="M829.3,987.7 L820.2,995.8 L820.2,992.2 C811.5,991.8 803,988.5 797.5,983.5 L801.3,978.8 C806,982.6 812.5,985 820.2,985.3 L820.2,980 Z"/>
      </g>
      <path d="M815.1,888 L859.3,876 L904.9,885.8 L906.6,947.7 L862.2,958.9 L816.3,950 Z" fill="#e6e6e6"/>
      <g font-family="'Liberation Sans',sans-serif" font-weight="700" fill="#7c7c7c">
        <text transform="translate(846.6,922.6) rotate(188)" font-size="7.4" letter-spacing=".1">TOP</text>
        <text transform="translate(887.3,931.5) rotate(-93) skewX(6)" font-size="7.4">LEFT</text>
        <text transform="translate(872,887.6) rotate(189) scale(1,.28) skewX(-40)" font-size="7" fill="#8a8a8a">FRONT</text>
      </g>
      <g fill="none" stroke="#929292" stroke-width="1.8" stroke-linejoin="round">
        <path d="M815.1,888 L859.3,876 L904.9,885.8 L860.5,897.8 Z"/>
        <path d="M815.1,888 L816.3,950 L862.2,958.9 L860.5,897.8"/>
      </g>
      <path d="M906.6,947.7 L856.5,936.9" stroke="#ecc6c6" stroke-width="1.3"/><path d="M853.6,936.3 L858.6,935.4 L858,939 Z" fill="#ecc6c6"/>
      <path d="M906.6,947.7 L857.6,961.2" stroke="#6fd06f" stroke-width="1.6"/><path d="M854.8,962 L858.6,959.2 L859.6,962.6 Z" fill="#6fd06f"/>
      <path d="M906.6,947.7 L905.1,880" stroke="#7d7de3" stroke-width="1.7"/><path d="M904.9,875.3 L907.2,881.6 L902.9,881.7 Z" fill="#7d7de3"/>
      <g font-family="'Liberation Sans',sans-serif" font-size="11.5">
        <text x="901.6" y="871.7" fill="#7474dd">Z</text>
        <text x="845.2" y="967.5" fill="#6fd06f">Y</text>
        <text x="844" y="938.8" fill="#eec4c4">X</text>
      </g>
    </g>

    <!-- scale bar -->
    <path d="M1261.5,1020.5 V1024.6 H1434 V1020.5" fill="none" stroke="#333" stroke-width="2"/>
  </svg>
  <span class="t" style="left:562.40px;top:953.25px;font-size:12px;color:#3a3a3a;-webkit-text-stroke:0;">1 [m]</span>

  <!-- scene tree overlay -->
  <div class="abs" style="left:858px;top:65px;width:250px;height:174px;border:1px solid #a8d3e3;border-radius:5px;background:rgba(255,255,255,.12)">
    <svg style="right:1px;bottom:1px" width="9" height="9" viewBox="0 0 9 9"><path d="M8.5,0.5 L0.5,8.5 M8.5,4.5 L4.5,8.5" stroke="#555" stroke-width="1"/></svg>
  </div>
  <i class="xp" style="left:871px;top:81px"></i><span class="t" style="left:883.12px;top:79.25px;font-size:11.5px;color:#5b9bb8;transform:scaleX(0.8806);">Scene</span>
  <i class="xp" style="left:887px;top:100px"></i><span class="t" style="left:899.10px;top:98.25px;font-size:11.5px;color:#5b9bb8;transform:scaleX(0.8961);">FSAE Full Car mesh</span>
  <i class="xp plus" style="left:903px;top:120px"></i>
  <svg style="left:917px;top:120.5px" width="12" height="8" viewBox="0 0 12 8"><path d="M0,4 C2.6,-0.6 9.4,-0.6 12,4 C9.4,8.6 2.6,8.6 0,4 Z" fill="#85857f"/><circle cx="6" cy="4" r="2.5" fill="#cfcfcc"/><circle cx="6" cy="4" r="1.4" fill="#77776f"/></svg>
  <span class="t" style="left:933.47px;top:118.25px;font-size:11.5px;color:#5b9bb8;transform:scaleX(0.9257);">solid_0</span>
  <i class="xp" style="left:887px;top:140px"></i><span class="t" style="left:900.00px;top:138.25px;font-size:11.5px;color:#5b9bb8;transform:scaleX(0.9592);">Geometry Primitives</span>
  <svg style="left:924px;top:162.5px" width="12" height="8" viewBox="0 0 12 8"><path d="M0,4 C2.6,-0.6 9.4,-0.6 12,4 C9.4,8.6 2.6,8.6 0,4 Z" fill="#cdcdcd"/><circle cx="6" cy="4" r="2.5" fill="#ececec"/><circle cx="6" cy="4" r="1.4" fill="#c6c6c6"/></svg>
  <span class="t" style="left:939.57px;top:160.25px;font-size:11.5px;color:#cbcbcb;transform:scaleX(0.9261);">Background Mesh Box</span>
  <svg style="left:924px;top:188.7px" width="12" height="8" viewBox="0 0 12 8"><path d="M0,4 C2.6,-0.6 9.4,-0.6 12,4 C9.4,8.6 2.6,8.6 0,4 Z" fill="#85857f"/><circle cx="6" cy="4" r="2.5" fill="#cfcfcc"/><circle cx="6" cy="4" r="1.4" fill="#77776f"/></svg>
  <span class="t" style="left:939.51px;top:186.25px;font-size:11.5px;color:#5b9bb8;transform:scaleX(0.9928);">Material Point</span>
  <svg style="left:924px;top:214.5px" width="12" height="8" viewBox="0 0 12 8"><path d="M0,4 C2.6,-0.6 9.4,-0.6 12,4 C9.4,8.6 2.6,8.6 0,4 Z" fill="#85857f"/><circle cx="6" cy="4" r="2.5" fill="#cfcfcc"/><circle cx="6" cy="4" r="1.4" fill="#77776f"/></svg>
  <span class="t" style="left:940.50px;top:212.25px;font-size:11.5px;color:#5b9bb8;transform:scaleX(0.9252);">Cartesian Box Lower</span>

  <!-- status / message field -->
  <div class="abs" style="left:10px;top:945px;width:200px;height:18px;border:1px solid #c4d6dc;background:rgba(255,255,255,.28)">
    <svg style="right:1px;bottom:1px" width="8" height="8" viewBox="0 0 8 8"><path d="M7.5,0.5 L0.5,7.5 M7.5,4 L4,7.5" stroke="#999" stroke-width="1"/></svg>
  </div>

  <!-- support buttons -->
  <div class="abs" style="left:901px;top:939px;width:138px;height:29px;background:#005e9e;border-top:2px solid #0469b2;border-radius:4px 4px 0 0"></div>
  <svg style="left:910px;top:947px" width="28" height="18" viewBox="0 0 28 18"><ellipse cx="13.4" cy="8.6" rx="13.4" ry="8.6" fill="#fff"/><path d="M20,13 L27,17.5 L17,16 Z" fill="#fff"/><path d="M7,5.2 H10 L11,3.8 H15.6 L16.6,5.2 H20 V12.8 H7 Z" fill="#005e9e"/><circle cx="13.5" cy="9" r="2.7" fill="#fff"/><circle cx="13.5" cy="9" r="1.5" fill="#005e9e"/></svg>
  <span class="t" style="left:944.50px;top:950.25px;font-size:12px;color:#fff;-webkit-text-stroke:0;">Report an issue</span>
  <div class="abs" style="left:1044px;top:939px;width:75px;height:29px;background:#005e9e;border-top:2px solid #0469b2;border-radius:4px 4px 0 0"></div>
  <svg style="left:1057px;top:949px" width="16" height="15" viewBox="0 0 16 15"><path d="M1,0 H15 Q16,0 16,1 V9.6 Q16,10.6 15,10.6 H6.4 L2.6,14.4 V10.6 H1 Q0,10.6 0,9.6 V1 Q0,0 1,0 Z" fill="#fff"/></svg>
  <span class="t" style="left:1083.30px;top:950.25px;font-size:12px;color:#fff;-webkit-text-stroke:0;">Chat</span>
</div>
</body>
</html>
